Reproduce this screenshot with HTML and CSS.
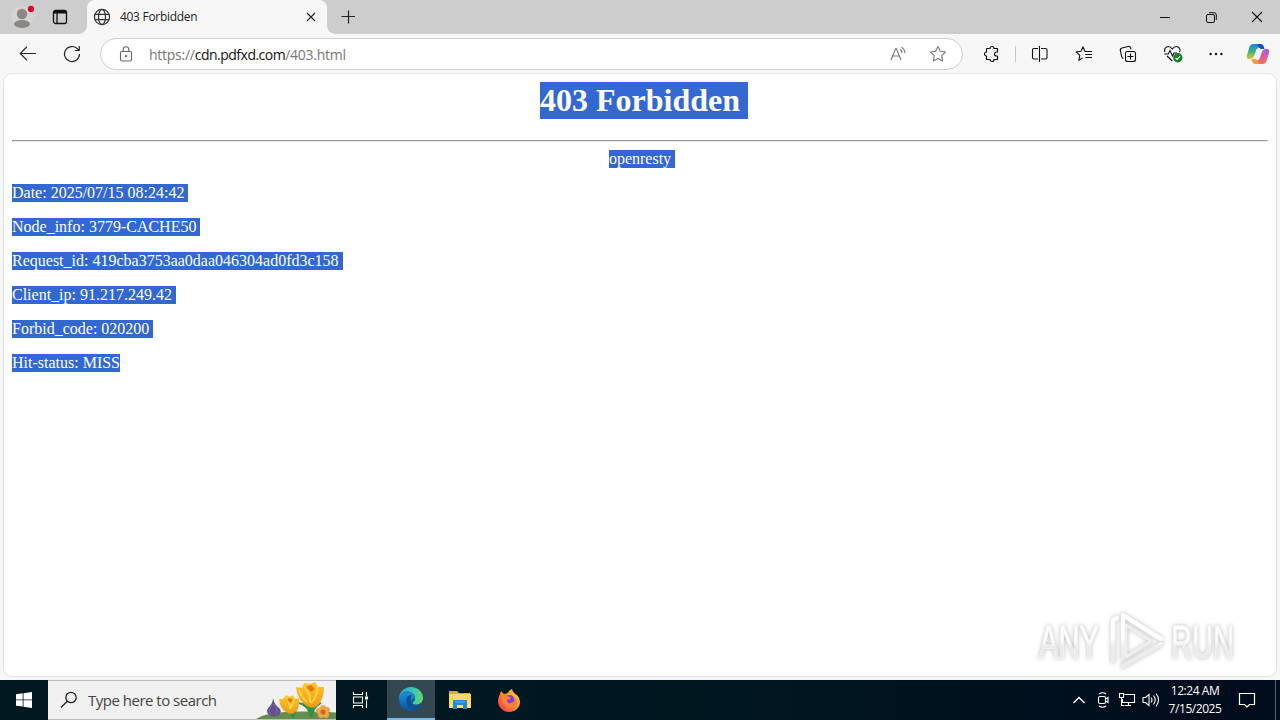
FILE: index.html
```html
<!DOCTYPE html>
<html lang="en">

<head>
    <meta charset="UTF-8">
    <meta name="viewport" content="width=device-width, initial-scale=1.0">
    <title>403 Forbidden</title>
    <link rel="stylesheet" href="styles.css">
</head>

<body>

    <!-- Tab strip -->
    <header class="tab-bar">
        <div class="profile">
            <svg width="24" height="24" viewBox="0 0 24 24">
                <circle cx="12" cy="12" r="11" fill="#d6d4d2" />
                <circle cx="12" cy="9" r="5.2" fill="#8b8784" />
                <ellipse cx="12" cy="19" rx="8" ry="4" fill="#8b8784" />
                <circle cx="21" cy="4" r="3.2" fill="#d90d25" />
            </svg>
        </div>
        <div class="workspaces">
            <svg width="16" height="16" viewBox="0 0 16 16" fill="none" stroke="#111">
                <rect x="1.5" y="1.5" width="13" height="13" rx="2" stroke-width="1.3" />
                <path d="M5 4v10" stroke-width="1.3" />
                <path d="M2 3h12" stroke-width="3" />
            </svg>
        </div>
        <div class="tab">
            <svg width="18" height="18" viewBox="0 0 18 18" fill="none" stroke="#333" stroke-width="1.2">
                <circle cx="9" cy="9" r="7.6" />
                <ellipse cx="9" cy="9" rx="3.5" ry="7.6" />
                <path d="M2 6.3h14M2 11.7h14" />
            </svg>
            <span class="tab-title">403 Forbidden</span>
            <svg class="tab-close" width="10" height="10" viewBox="0 0 10 10" stroke="#222" stroke-width="1.1">
                <path d="M1 1l8 8M9 1L1 9" />
            </svg>
        </div>
        <div class="new-tab">
            <svg width="14" height="14" viewBox="0 0 14 14" stroke="#222" stroke-width="1.2">
                <path d="M7.5 .5v13M.5 6.5h14" />
            </svg>
        </div>
        <div class="window-buttons">
            <div class="window-button">
                <svg width="10" height="10" viewBox="0 0 10 10" stroke="#111"><path d="M0 5.5h10" /></svg>
            </div>
            <div class="window-button">
                <svg width="11" height="11" viewBox="0 0 11 11" fill="none" stroke="#111">
                    <rect x=".5" y="2.5" width="8" height="8" rx="1.5" />
                    <path d="M3 .7h5Q10.3.7 10.3 3v5" />
                </svg>
            </div>
            <div class="window-button">
                <svg width="12" height="12" viewBox="0 0 12 12" stroke="#111" stroke-width="1.1">
                    <path d="M1 1l10 10M11 1L1 11" />
                </svg>
            </div>
        </div>
    </header>

    <!-- Toolbar -->
    <nav class="toolbar">
        <div class="tool">
            <svg width="18" height="18" viewBox="0 0 18 18" fill="none" stroke="#222" stroke-width="1.2">
                <path d="M17 8.5H1.5M8 1.7L1.3 8.5 8 15.3" />
            </svg>
        </div>
        <div class="tool">
            <svg width="18" height="18" viewBox="0 0 18 18" fill="none" stroke="#222" stroke-width="1.2">
                <path d="M16.5 9a7.5 7.5 0 1 1-2.2-5.3l1.6 1.6M16.2 1v4.5h-4.5" />
            </svg>
        </div>
        <div class="address">
            <svg class="lock" width="14" height="16" viewBox="0 0 14 16" fill="none" stroke="#666" stroke-width="1.1">
                <rect x="1.5" y="5.5" width="11" height="9.5" rx="1.5" />
                <path d="M4.2 5.5V3.6a2.8 2.8 0 0 1 5.6 0v1.9" />
                <circle cx="7" cy="10.2" r=".6" fill="#555" />
            </svg>
            <span class="url">https://<b>cdn.pdfxd.com</b>/403.html</span>
            <svg class="read-aloud" width="17" height="16" viewBox="0 0 17 16" fill="none" stroke="#777" stroke-width="1.1">
                <path d="M1 14L5.7 2.5h.6L11 14M2.7 10h6.6M10 3.2q2 1.3 2 3.8M11.5 1.2q3.3 2 3.5 6" />
            </svg>
            <svg class="star" width="18" height="18" viewBox="0 0 18 18" fill="none" stroke="#777" stroke-width="1.1" stroke-linejoin="round">
                <path d="M9 1.5l2.3 4.8 5.2.7-3.8 3.7.9 5.2L9 13.4l-4.6 2.5.9-5.2L1.5 7l5.2-.7z" />
            </svg>
        </div>
        <div class="tool extensions">
            <svg width="18" height="18" viewBox="0 0 18 18" fill="none" stroke="#111" stroke-width="1.2" stroke-linejoin="round">
                <path d="M3.5 3.5H7a2 2 0 0 1 4 0h3.5V7h-1a2 2 0 0 0 0 4h1v3.5H11a2 2 0 0 1-4 0H3.5V11a2 2 0 0 1 0-4z" />
            </svg>
        </div>
        <div class="separator"></div>
        <div class="tool">
            <svg width="18" height="18" viewBox="0 0 18 18" fill="none" stroke="#111" stroke-width="1.1">
                <path d="M7 3.5H3Q1.5 3.5 1.5 5v7.5q0 1.5 1.5 1.5H7M10 3.5h4.5q1.5 0 1.5 1.5v7.5q0 1.5-1.5 1.5H10M8.5 1v16" />
            </svg>
        </div>
        <div class="tool">
            <svg width="18" height="18" viewBox="0 0 18 18" fill="none" stroke="#111" stroke-width="1.1" stroke-linejoin="round">
                <path d="M11.5 6.5H10L8 1.8 6 6.3l-4.8.6L4.8 10.3l-1 5 3.9-2.4M10.3 6.5H17M10.3 9.5H17M10.3 12.5H17" />
            </svg>
        </div>
        <div class="tool">
            <svg width="18" height="18" viewBox="0 0 18 18" fill="none" stroke="#111" stroke-width="1.1">
                <rect x="6.5" y="6.5" width="10" height="10" rx="2" />
                <path d="M11.5 8.5v6M8.5 11.5h6M4.5 13.5Q3 13 2.6 11.3L1.3 5.5Q1 3.5 3 3l6-1.5q2-.4 2.6 1.4l.4 1.5" />
            </svg>
        </div>
        <div class="tool heart">
            <svg width="20" height="18" viewBox="0 0 20 18" fill="none" stroke="#111" stroke-width="1.1">
                <path d="M2 7Q.8 3.8 3.2 2.2C5.5.8 7.8 2 9.3 4 10.8 2 13.2.8 15.5 2.2 17.6 3.8 17 6.2 16.5 7M1.3 9h4L7 5.5 9.5 11 11 8h3M4 11l5.3 5" />
                <circle cx="14.8" cy="12.8" r="4.7" fill="#138123" stroke="none" />
                <path d="M12.5 12.8l1.6 1.6 3-3" stroke="#fff" />
            </svg>
        </div>
        <div class="tool">
            <svg width="14" height="4" viewBox="0 0 14 4" fill="#111">
                <circle cx="1.6" cy="2" r="1.2" /><circle cx="7" cy="2" r="1.2" /><circle cx="12.4" cy="2" r="1.2" />
            </svg>
        </div>
        <div class="tool copilot">
            <svg width="24" height="22" viewBox="0 0 24 22">
                <defs>
                    <linearGradient id="copilot-left" x2="0" y2="1">
                        <stop stop-color="#1686e0" /><stop offset=".5" stop-color="#39b27c" /><stop offset="1" stop-color="#eebf25" />
                    </linearGradient>
                    <linearGradient id="copilot-right" x2="0" y2="1">
                        <stop stop-color="#9a5be6" /><stop offset=".5" stop-color="#df5aa0" /><stop offset="1" stop-color="#f47849" />
                    </linearGradient>
                </defs>
                <path d="M7 1h9l-4 4q-2 1-2.5 4L8 13q-1 3-4 3H3Q0 16 1 12L3.5 4q1-3 3.5-3z" fill="url(#copilot-left)" />
                <path d="M11 1h4q2 0 3 3l.5 2H15q-2 0-3-3z" fill="#1950c5" />
                <path d="M17 21H8l4-4q2-1 2.5-4L16 9q1-3 4-3h1q3 0 2 4l-2.5 8q-1 3-3.5 3z" fill="url(#copilot-right)" />
                <path d="M13 21H9q-2 0-3-3l-.5-2H9q2 0 3 3z" fill="#f39a3b" />
            </svg>
        </div>
    </nav>

    <!-- Web page -->
    <main class="page">
        <h1><span class="selected heading">403 Forbidden</span></h1>
        <hr>
        <div class="server"><span class="selected">openresty</span></div>
        <p><span class="selected">Date: 2025/07/15 08:24:42</span></p>
        <p><span class="selected">Node_info: 3779-CACHE50</span></p>
        <p><span class="selected">Request_id: 419cba3753aa0daa046304ad0fd3c158</span></p>
        <p><span class="selected">Client_ip: 91.217.249.42</span></p>
        <p><span class="selected">Forbid_code: 020200</span></p>
        <p><span class="selected last">Hit-status: MISS</span></p>

        <div class="watermark">
            <span class="word">ANY</span>
            <svg width="60" height="66" viewBox="0 0 60 66" fill="none" stroke-width="4.5" stroke-linejoin="round" stroke-linecap="round">
                <defs>
                    <linearGradient id="mark" gradientUnits="userSpaceOnUse" x1="0" y1="0" x2="0" y2="66">
                        <stop offset=".45" stop-color="#fff" /><stop offset=".6" stop-color="#ececec" />
                    </linearGradient>
                </defs>
                <path d="M7 53V12l4-2M17 50V7l38 24M17 58l38-22" stroke="url(#mark)" />
                <path d="M20 17v32l25-16z" stroke="#efefef" stroke-width="3" />
            </svg>
            <span class="word">RUN</span>
        </div>
    </main>

    <!-- Taskbar -->
    <footer class="taskbar">
        <div class="task start">
            <svg width="16" height="16" viewBox="0 0 16 16" fill="#fff">
                <path d="M0 2.2L6.7 1.3V7.5H0zM7.5 1.2L16 0v7.5H7.5zM0 8.3h6.7v6.3L0 13.7zM7.5 8.3H16V16l-8.5-1.2z" />
            </svg>
        </div>
        <div class="search">
            <svg width="18" height="18" viewBox="0 0 18 18" fill="none" stroke="#222" stroke-width="1.3">
                <circle cx="11" cy="6.5" r="5.2" /><path d="M7.3 10.2L1 16.5" />
            </svg>
            <span class="search-text">Type here to search</span>
            <svg class="flowers" width="80" height="38" viewBox="0 0 80 38">
                <defs>
                    <linearGradient id="petal" x2="0" y2="1">
                        <stop stop-color="#ffc52e" /><stop offset="1" stop-color="#ef9b14" />
                    </linearGradient>
                </defs>
                <path d="M0 38Q10 32 24 31.5q20-2 56 0V38z" fill="#668d50" />
                <path d="M36 37q0-7-1-11M36 37q-1-8-7-10 7 1 8 6 1-4 4-6-2 5-4 10M54 36q0-8 2-13M54 36q0-10-11-14 9 1 12 7 3-5 10-7-8 4-9 14" fill="#339246" stroke="#339246" stroke-width="1.5" />
                <path d="M17 17q0 5-4 9-4 4 0 8 5 3 10 0 4-4-1-8-4-3-5-9z" fill="#64508c" />
                <path d="M16 23q-4 6-2 11M18 23q5 6 2 11" fill="none" stroke="#8068a6" />
                <path d="M23 18h4l3-4 4 2 3-2 2 4 4-1q1 12-5 15-4 2-8-1-6-3-7-13z" fill="url(#petal)" />
                <path d="M30 16q4 5 4 12M38 17q-1 7-4 11" fill="none" stroke="#ffd145" stroke-width="2" />
                <path d="M40 6l6 1 2-5 6 1 5-2 3 5h6q0 13-7 19-5 3-10 0-10-6-11-19z" fill="url(#petal)" />
                <path d="M48 5q7 8 6 17M61 6q1 9-6 16M43 9q3 8 8 12" fill="none" stroke="#ffd145" stroke-width="2" />
                <path d="M50 6l5-2 4 4-4 3zM31 18l3-1 3 2-3 3z" fill="#e8760d" />
                <g fill="#efa447"><circle cx="67" cy="27" r="3" /><circle cx="71" cy="29" r="3" /><circle cx="70" cy="34" r="3" /><circle cx="65" cy="34" r="3" /><circle cx="63" cy="30" r="3" /></g>
                <circle cx="67" cy="31" r="2.5" fill="#cb6524" />
            </svg>
        </div>
        <div class="task">
            <svg width="18" height="18" viewBox="0 0 18 18" fill="none" stroke="#fff" stroke-width="1.1">
                <path d="M2.5 1v2.5h9V1M2.5 17v-2.5h9V17M2.5 6h9v6h-9zM15.5 1v4M15.5 9.5V17" />
                <rect x="14.5" y="6" width="2" height="2" fill="#fff" />
            </svg>
        </div>
        <div class="task active">
            <svg width="26" height="26" viewBox="0 0 26 26">
                <defs>
                    <linearGradient id="edge-top"><stop stop-color="#2d9fdc" /><stop offset=".5" stop-color="#35c1c5" /><stop offset="1" stop-color="#63d76b" /></linearGradient>
                    <linearGradient id="edge-body" x2="0" y2="1"><stop stop-color="#1792dc" /><stop offset="1" stop-color="#0d549f" /></linearGradient>
                </defs>
                <path d="M1 13c0-4 4-7 9-7 4 0 7 3 7 6l-3 2c0 5 5 7 10 4-2 4-6 7-11 7C6 25 1 20 1 13z" fill="url(#edge-body)" />
                <path d="M8.5 14c0-3 2-5 5-5-1 2-1 7 1 9 3 3 7 2 9.5 0-2 4-6 7-10 6-4-2-6-6-5.5-10z" fill="#114f92" />
                <path d="M1 13C1 6 6 1 13 1s12 5 12 11c0 4-3 6.500-7 6.500-3 0-4-1-3-2.500 1-1 2-2 2-4 0-4-4-6.500-8-6.500-4 0-7 3-8 7.500z" fill="url(#edge-top)" />
            </svg>
        </div>
        <div class="task explorer">
            <svg width="22" height="20" viewBox="0 0 22 20">
                <path d="M0 1h8l2 2h11v15H0z" fill="#e7a72b" />
                <path d="M0 4h22v14H0z" fill="#ffd96b" />
                <path d="M4 19v-8q0-1 1-1h12q1 0 1 1v8h-4v-4H8v4z" fill="#2589cf" />
                <path d="M6 12h10" stroke="#5bb8ed" />
            </svg>
        </div>
        <div class="task">
            <svg width="24" height="24" viewBox="0 0 24 24">
                <defs>
                    <linearGradient id="fox" x1="1" x2="0" y2="1"><stop stop-color="#ffe343" /><stop offset=".5" stop-color="#ff872d" /><stop offset="1" stop-color="#f32858" /></linearGradient>
                </defs>
                <path d="M3 6l1-3 3 3 4-1q1-3 4-4 1 4 5 6 3 3 3 7c0 6-5 10-11 10S1 19 1 13q0-4 2-7z" fill="url(#fox)" />
                <circle cx="12.5" cy="12" r="5" fill="#8140cf" />
                <path d="M5 8q4-2 7 1l2 1q-2 2-4 2 0 4 4 3 5-1 4-6 4 4 1 8-5 5-11 1-4-4-3-10z" fill="#ff8138" />
            </svg>
        </div>
        <div class="tray">
            <div class="tray-icon">
                <svg width="14" height="8" viewBox="0 0 14 8" fill="none" stroke="#fff" stroke-width="1.3"><path d="M1.5 7L7 1.5 12.5 7" /></svg>
            </div>
            <div class="tray-icon">
                <svg width="14" height="18" viewBox="0 0 14 18" fill="none" stroke="#fff" stroke-width="1.1">
                    <rect x="2.5" y="5.5" width="7" height="7" rx="1.5" /><path d="M9.5 8L12 6.5v5L9.500 10M3 3q3.500-2.500 7 0M3 15q3.500 2.500 7 0" />
                </svg>
            </div>
            <div class="tray-icon">
                <svg width="18" height="16" viewBox="0 0 18 16" fill="none" stroke="#fff" stroke-width="1.1">
                    <path d="M6.5 2.5h10v8h-12V7M10.5 10.5v3M7 13.5h6M1.5 1.5h4v4h-4zM3.5 5.5v8h3" />
                </svg>
            </div>
            <div class="tray-icon">
                <svg width="18" height="16" viewBox="0 0 18 16" fill="none" stroke="#fff" stroke-width="1.1">
                    <path d="M1 5.500h2.500L7 2.500v11l-3.500-3H1zM9 5.500q2 2.500 0 5M11.500 3.500q3.500 4.500 0 9M14 1.500q5 6.500 0 13" />
                </svg>
            </div>
            <div class="clock">
                <div class="time">12:24 AM</div>
                <div class="date">7/15/2025</div>
            </div>
            <div class="notifications">
                <svg width="18" height="18" viewBox="0 0 18 18" fill="none" stroke="#fff" stroke-width="1.2">
                    <path d="M1.5 2.5h15v11h-5L9 16l-2.5-2.5h-5z" />
                </svg>
            </div>
            <div class="show-desktop"></div>
        </div>
    </footer>

</body>

</html>
```
FILE: styles.css
```css
* {
    box-sizing: border-box;
}

body {
    margin: 0;
    width: 1280px;
    height: 720px;
    overflow: hidden;
    display: flex;
    flex-direction: column;
    background: #f7f7f7;
    font-family: "Open Sans", "Noto Sans", sans-serif;
}

svg {
    display: block;
    flex-shrink: 0;
}

/* Tab strip */
.tab-bar {
    height: 34px;
    display: flex;
    background: #cdcdcd;
}

.profile,
.workspaces,
.new-tab,
.window-button,
.tool,
.task,
.tray-icon,
.notifications {
    display: flex;
    align-items: center;
    justify-content: center;
}

.profile {
    width: 44px;
}

.workspaces {
    width: 32px;
    margin-right: 11px;
}

.tab {
    position: relative;
    width: 240px;
    padding: 0 11px 0 6px;
    display: flex;
    align-items: center;
    background: #f7f7f7;
    border-radius: 8px 8px 0 0;
}

.tab::before,
.tab::after {
    content: "";
    position: absolute;
    bottom: 0;
    width: 8px;
    height: 8px;
}

.tab::before {
    left: -8px;
    background: radial-gradient(circle at 0 0, #cdcdcd 7.5px, #f7f7f7 8px);
}

.tab::after {
    right: -8px;
    background: radial-gradient(circle at 100% 0, #cdcdcd 7.5px, #f7f7f7 8px);
}

.tab-title {
    margin-left: 9px;
    padding-bottom: 1px;
    font-size: 12px;
    letter-spacing: -0.3px;
    color: #222;
}

.tab-close {
    margin-left: auto;
}

.new-tab {
    width: 42px;
}

.window-buttons {
    margin-left: auto;
    display: flex;
}

.window-button {
    width: 46px;
}

/* Toolbar */
.toolbar {
    height: 40px;
    padding-left: 6px;
    display: flex;
    align-items: center;
}

.tool {
    width: 44px;
    height: 32px;
}

.address {
    width: 863px;
    height: 32px;
    margin-left: 6px;
    padding: 0 15px 0 18px;
    display: flex;
    align-items: center;
    background: #fff;
    border: 1px solid #d0d0d0;
    border-radius: 16px;
}

.url {
    margin-left: 16px;
    font-size: 14px;
    letter-spacing: -0.26px;
    color: #777;
}

.url b {
    font-weight: 400;
    letter-spacing: -0.5px;
    color: #111;
}

.read-aloud {
    margin-left: auto;
    margin-right: 22px;
}

.extensions {
    margin-left: 7px;
}

.separator {
    width: 1px;
    height: 16px;
    margin: 0 2px 0 1px;
    background: #c6c6c6;
}

.heart {
    padding-left: 2px;
}

.copilot {
    width: 40px;
}

/* Web page */
.page {
    position: relative;
    height: 604px;
    margin: -1px 3px 3px;
    padding: 8px;
    background: #fff;
    border: 1px solid #e2e2e2;
    border-radius: 9px;
    font-family: "Liberation Serif", serif;
    font-size: 16px;
    line-height: 18px;
}

.page h1 {
    margin: 0 0 21px;
    font-size: 32px;
    line-height: 37px;
    text-align: center;
}

.page hr {
    margin: 0 0 8px;
}

.page p {
    margin: 16px 0;
}

.server {
    text-align: center;
}

.selected {
    margin-right: -4px;
    padding: 0 4px 1px 0;
    color: #fff;
    background: #3367d1;
}

.heading {
    margin-right: -8px;
    padding-right: 8px;
}

.last {
    margin-right: 0;
    padding-right: 0;
}

.watermark {
    position: absolute;
    right: 42px;
    bottom: 2px;
    display: flex;
    align-items: center;
    font-family: "Liberation Sans", sans-serif;
    font-size: 47px;
    line-height: 60px;
    filter: drop-shadow(0 0 2px #bbb);
}

/* condensed lettering */
.word {
    width: 100px;
    margin-top: 2px;
    margin-right: -37px;
    transform: scaleX(.62);
    transform-origin: left;
    color: transparent;
    background: linear-gradient(#fff 48%, #eaeaea 58%);
    -webkit-background-clip: text;
    background-clip: text;
    -webkit-text-stroke: 1px #f4f4f4;
}

.watermark svg {
    margin: 0 5px 0 4px;
}

/* Taskbar */
.taskbar {
    height: 40px;
    display: flex;
    background: linear-gradient(90deg, #001921, #001720 55%, #000b1c);
}

.task {
    width: 48px;
}

.search {
    width: 288px;
    padding-left: 12px;
    display: flex;
    align-items: center;
    background: #f1f1f1;
    border: 1px solid #bcbcbc;
    border-left: none;
    border-right: none;
}

.search-text {
    margin-left: 10px;
    font-size: 15px;
    letter-spacing: -0.5px;
    color: #444;
}

.flowers {
    margin-left: auto;
}

.active {
    margin-left: 3px;
    background: #344850;
    border-bottom: 2px solid #76b9ed;
}

.explorer {
    width: 50px;
}

.tray {
    margin-left: auto;
    display: flex;
    color: #fff;
}

.tray-icon {
    width: 24px;
}

.clock {
    width: 64px;
    padding-top: 2px;
    font-size: 12px;
    line-height: 18px;
    text-align: center;
    letter-spacing: -0.45px;
}

.notifications {
    width: 40px;
}

.show-desktop {
    width: 5px;
    margin-left: 8px;
    border-left: 1px solid #53606b;
}
```
